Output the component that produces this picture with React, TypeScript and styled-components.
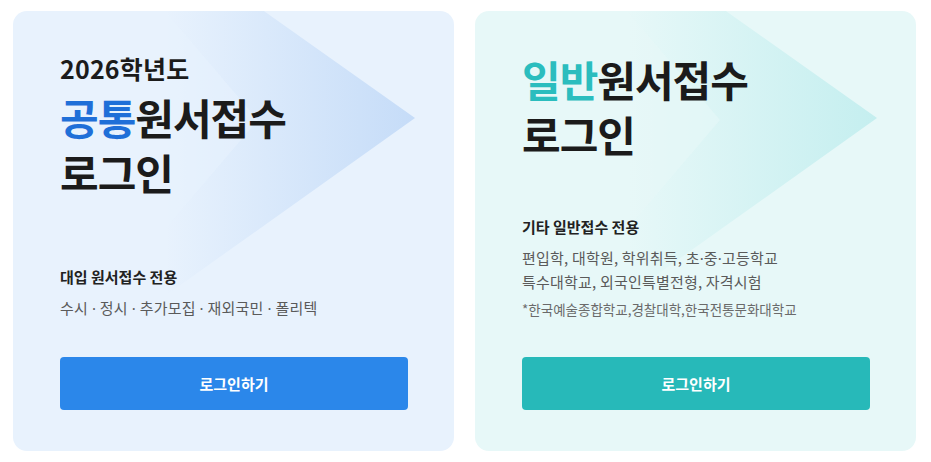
import styled, { createGlobalStyle } from "styled-components";

// ─── Global ──────────────────────────────────────────────────────────────────

const GlobalStyle = createGlobalStyle`
  html, body {
    margin: 0;
    padding: 0;
    background: #ffffff;
  }
  body {
    font-family: "Noto Sans CJK KR", "Noto Sans", sans-serif;
    color: #1b1b1b;
  }
  * {
    box-sizing: border-box;
  }
`;

type Tone = "blue" | "teal";

const TONES = {
  blue: {
    bg: "#e8f2fd",
    accent: "#1f6fd8",
    button: "#2b87ea",
    shape: "40,120,225",
  },
  teal: {
    bg: "#e7f8f8",
    accent: "#2bbdbe",
    button: "#27b9b9",
    shape: "40,195,200",
  },
};

// ─── Styled Components ───────────────────────────────────────────────────────

const StyledPage = styled.div`
  display: flex;
  gap: 21px;
  padding: 11px 15px 11px 13px;
`;

const StyledCard = styled.section<{ $tone: Tone }>`
  position: relative;
  flex: 1 1 0;
  min-height: 440px;
  display: flex;
  flex-direction: column;
  padding: 40px 46px 41px 47px;
  background: ${(p) => TONES[p.$tone].bg};
  border-radius: 14px;
  overflow: hidden;
`;

const StyledShape = styled.svg`
  position: absolute;
  left: 0;
  top: 0;
  width: 441px;
  height: 440px;
  pointer-events: none;
`;

const StyledHead = styled.div`
  position: relative;
  display: flex;
  flex-direction: column;
`;

const StyledYear = styled.div`
  font-size: 25px;
  line-height: 34px;
  font-weight: 700;
  letter-spacing: 0.2px;
  margin-bottom: 4px;
  color: #1b1b1b;
`;

const StyledTitle = styled.h2`
  margin: 0;
  font-size: 42px;
  line-height: 55px;
  font-weight: 700;
  letter-spacing: -1px;
  color: #1b1b1b;
`;

const StyledAccent = styled.span<{ $tone: Tone }>`
  color: ${(p) => TONES[p.$tone].accent};
`;

const StyledBottom = styled.div`
  position: relative;
  margin-top: auto;
  display: flex;
  flex-direction: column;
`;

const StyledLabel = styled.div`
  font-size: 15px;
  line-height: 20px;
  font-weight: 700;
  letter-spacing: 0;
  color: #222222;
  margin-bottom: 9px;
`;

const StyledLine = styled.div`
  font-size: 15px;
  line-height: 24px;
  letter-spacing: 0.2px;
  color: #5a5a5a;
`;

// latin middot, narrower than the CJK one
const StyledDot = styled.span`
  font-family: "Noto Sans", sans-serif;
  letter-spacing: 0;
`;

const StyledNote = styled.div`
  font-size: 13.5px;
  line-height: 22px;
  letter-spacing: 0;
  color: #6a6a6a;
  margin-top: 4px;
`;

const StyledButton = styled.button<{ $tone: Tone }>`
  margin-top: 37px;
  height: 53px;
  width: 100%;
  border: none;
  border-radius: 4px;
  background: ${(p) => TONES[p.$tone].button};
  color: #ffffff;
  font-family: inherit;
  font-size: 15px;
  font-weight: 700;
  letter-spacing: 0;
  cursor: pointer;
`;

// ─── Parts ───────────────────────────────────────────────────────────────────

const Chevron = ({ tone }: { tone: Tone }) => {
  const id = `chev-${tone}`;
  const c = TONES[tone].shape;
  return (
    <StyledShape viewBox="0 0 441 440" aria-hidden>
      <defs>
        <linearGradient id={id} x1="152" y1="0" x2="402" y2="0" gradientUnits="userSpaceOnUse">
          <stop offset="0" stopColor={`rgb(${c})`} stopOpacity="0" />
          <stop offset="1" stopColor={`rgb(${c})`} stopOpacity="0.18" />
        </linearGradient>
      </defs>
      <polygon points="152,-70 402,107 152,285" fill={`url(#${id})`} />
      <polygon points="152,0 245,109 152,218" fill={TONES[tone].bg} fillOpacity="0.55" />
    </StyledShape>
  );
};

const Dotted = ({ items, spaced }: { items: string[]; spaced?: boolean }) => (
  <>
    {items.map((item, i) => (
      <span key={item}>
        {i > 0 && <StyledDot>{spaced ? " · " : "·"}</StyledDot>}
        {item}
      </span>
    ))}
  </>
);

// ─── Component ───────────────────────────────────────────────────────────────

const App = () => {
  return (
    <>
      <GlobalStyle />
      <StyledPage>
        <StyledCard $tone="blue">
          <Chevron tone="blue" />
          <StyledHead>
            <StyledYear>2026학년도</StyledYear>
            <StyledTitle>
              <StyledAccent $tone="blue">공통</StyledAccent>원서접수
              <br />
              로그인
            </StyledTitle>
          </StyledHead>
          <StyledBottom>
            <StyledLabel>대입 원서접수 전용</StyledLabel>
            <StyledLine>
              <Dotted spaced items={["수시", "정시", "추가모집", "재외국민", "폴리텍"]} />
            </StyledLine>
            <StyledButton $tone="blue">로그인하기</StyledButton>
          </StyledBottom>
        </StyledCard>

        <StyledCard $tone="teal">
          <Chevron tone="teal" />
          <StyledHead>
            <StyledTitle>
              <StyledAccent $tone="teal">일반</StyledAccent>원서접수
              <br />
              로그인
            </StyledTitle>
          </StyledHead>
          <StyledBottom>
            <StyledLabel>기타 일반접수 전용</StyledLabel>
            <StyledLine>
              편입학, 대학원, 학위취득, <Dotted items={["초", "중", "고등학교"]} />
            </StyledLine>
            <StyledLine>특수대학교, 외국인특별전형, 자격시험</StyledLine>
            <StyledNote>*한국예술종합학교,경찰대학,한국전통문화대학교</StyledNote>
            <StyledButton $tone="teal">로그인하기</StyledButton>
          </StyledBottom>
        </StyledCard>
      </StyledPage>
    </>
  );
};

App.displayName = "App";
export default App;
